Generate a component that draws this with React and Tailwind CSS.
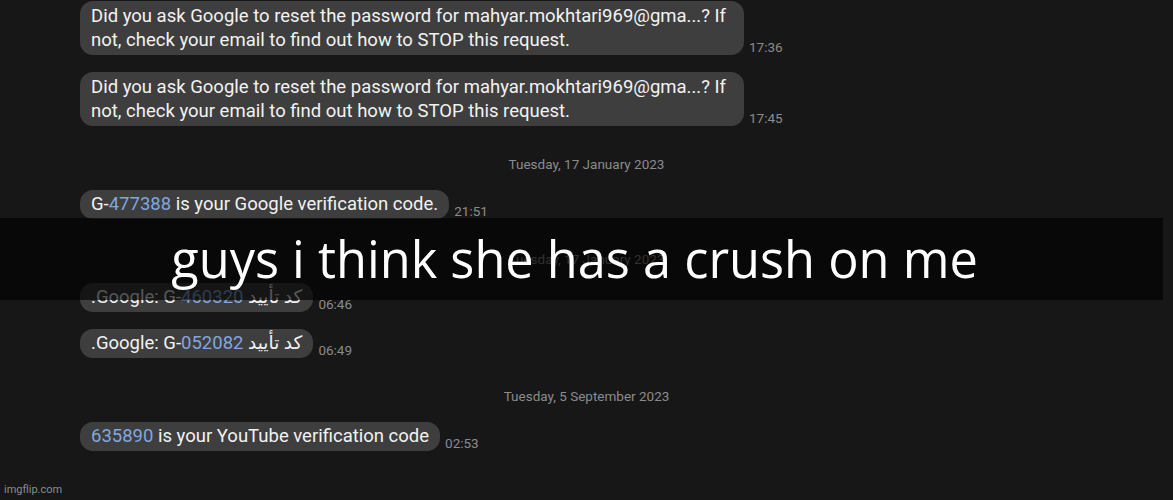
import React from "react";

const font = { fontFamily: 'Roboto, "DejaVu Sans", "Noto Sans", sans-serif' };

function Bubble({ children, time, rtl, wide }) {
  return (
    <div className="flex items-end">
      <div
        dir={rtl ? "rtl" : undefined}
        className={
          wide
            ? "rounded-[13px] bg-[#3e3e3e] py-[2px] pl-[11px] pr-[18px] text-[18.5px] leading-[25px] text-[#f2f2f2]"
            : "rounded-[13px] bg-[#3e3e3e] px-[11px] py-[2px] text-[18.5px] leading-[25px] text-[#f2f2f2]"
        }
      >
        {children}
      </div>
      <span className="ml-[5px] text-[13.5px] leading-[16px] text-[#8b8b8b]">{time}</span>
    </div>
  );
}

function Blue({ children }) {
  return <span className="text-[#82a6de]">{children}</span>;
}

function DateSep({ children }) {
  return (
    <div className="text-center text-[13.5px] leading-[16px] text-[#8b8b8b]">{children}</div>
  );
}

export default function App() {
  return (
    <div className="relative h-[500px] w-[1173px] overflow-hidden bg-[#171717]" style={font}>
      <div className="flex w-[1173px] flex-col pl-[80px]">
        <div className="mt-[1px]">
          <Bubble time="17:36" wide>
            <div className="py-[1px] leading-[24px]">
              Did you ask Google to reset the password for mahyar.mokhtari969@gma...? If
              <br />
              not, check your email to find out how to STOP this request.
            </div>
          </Bubble>
        </div>
        <div className="mt-[17px]">
          <Bubble time="17:45" wide>
            <div className="py-[1px] leading-[24px]">
              Did you ask Google to reset the password for mahyar.mokhtari969@gma...? If
              <br />
              not, check your email to find out how to STOP this request.
            </div>
          </Bubble>
        </div>
        <div className="mt-[30px] pr-[80px]">
          <DateSep>Tuesday, 17 January 2023</DateSep>
        </div>
        <div className="mt-[18px]">
          <Bubble time="21:51">
            G-<Blue>477388</Blue> is your Google verification code.
          </Bubble>
        </div>
        <div className="mt-[32px] pr-[80px]">
          <DateSep>Tuesday, 17 January 2023</DateSep>
        </div>
        <div className="mt-[16px]">
          <Bubble time="06:46" rtl>
            کد تأیید Google: G-<Blue>460320</Blue>.
          </Bubble>
        </div>
        <div className="mt-[17px]">
          <Bubble time="06:49" rtl>
            کد تأیید Google: G-<Blue>052082</Blue>.
          </Bubble>
        </div>
        <div className="mt-[30px] pr-[80px]">
          <DateSep>Tuesday, 5 September 2023</DateSep>
        </div>
        <div className="mt-[18px]">
          <Bubble time="02:53">
            <Blue>635890</Blue> is your YouTube verification code
          </Bubble>
        </div>
      </div>

      <div className="absolute left-[4px] top-[483px] text-[11px] leading-[14px] text-[#8b8b8b]">
        imgflip.com
      </div>

      <div className="absolute left-0 top-[218px] flex h-[82px] w-[1163px] items-center justify-center bg-[rgba(0,0,0,0.65)] pr-[14px]">
        <span
          className="text-[50.5px] leading-none text-white"
          style={{ fontFamily: '"Open Sans", "Noto Sans", sans-serif' }}
        >
          guys i think she has a crush on me
        </span>
      </div>
    </div>
  );
}
